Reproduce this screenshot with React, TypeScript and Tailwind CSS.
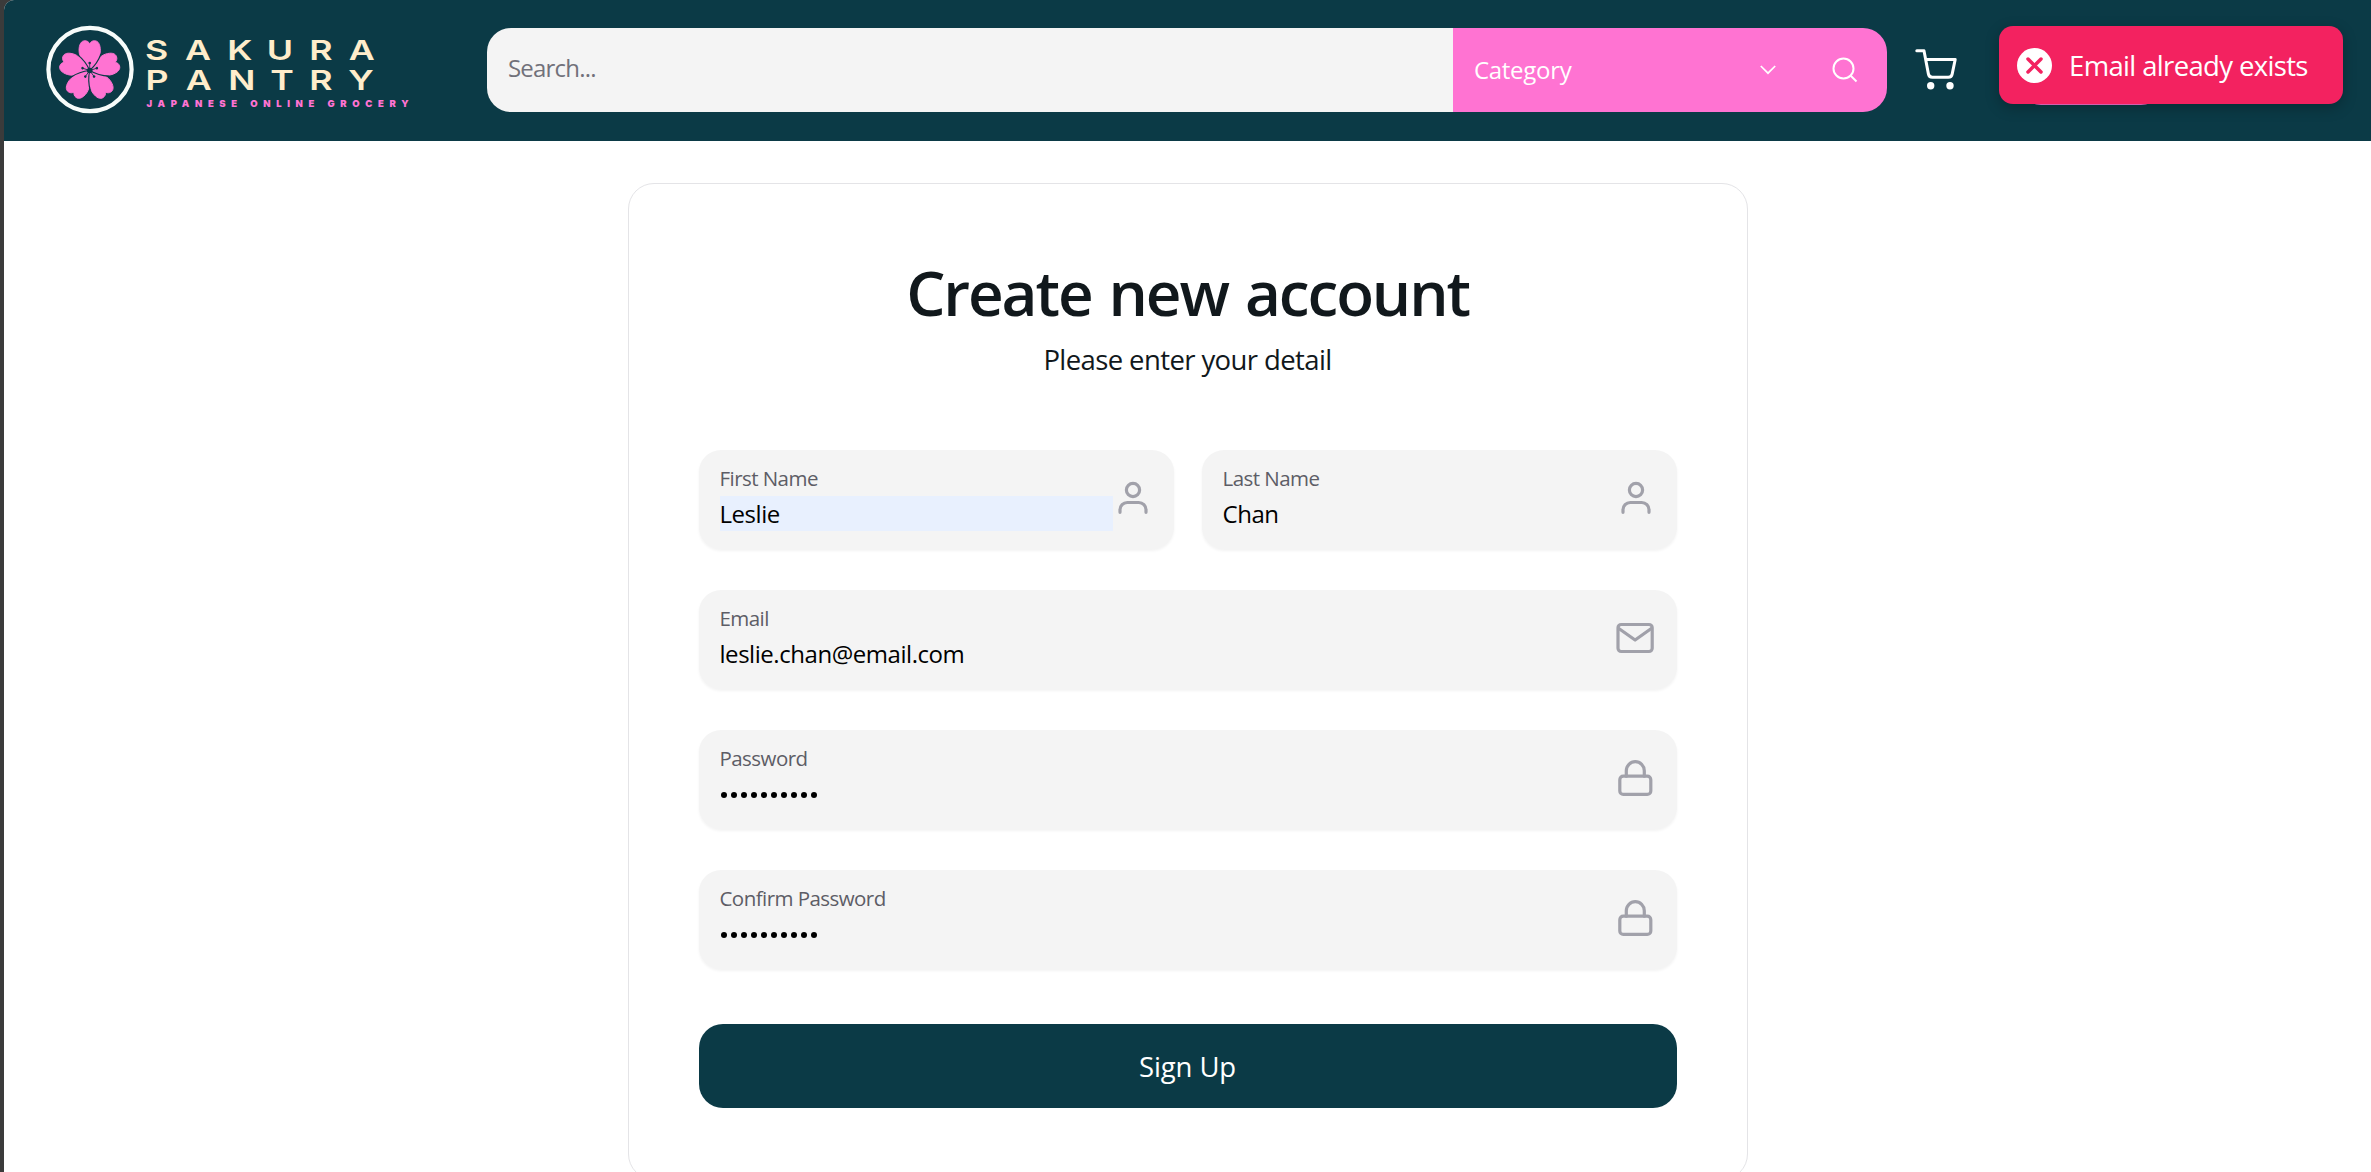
import React from "react";

const PETAL = "M0 0 C-4 -4 -10.700 -13 -10.700 -20 C-10.700 -26 -8.500 -29.800 -4.800 -29.800 C-2.400 -29.800 -1 -28.500 0 -26.800 C1 -28.500 2.400 -29.800 4.800 -29.800 C8.500 -29.800 10.700 -26 10.700 -20 C10.700 -13 4 -4 0 0Z";

function Logo() {
  return (
    <svg width="370" height="90" viewBox="45 25 370 90" className="shrink-0" fontFamily="Inter, sans-serif">
      <circle cx="90" cy="69.5" r="41.6" fill="none" stroke="#f7fcfa" strokeWidth="4.2" />
      <g transform="translate(89.700 70.5)">
        {[0, 72, 144, 216, 288].map((a) => (
          <path key={a} transform={`rotate(${a})`} d={PETAL} fill="#ff73d2" stroke="#ff73d2" strokeWidth="0.9" />
        ))}
        {[0, 72, 144, 216, 288].map((a) => (
          <g key={a} transform={`rotate(${a})`} stroke="#0b3a46" fill="none">
            <path d="M0 0C4.500 -4 8.500 -9 11.300 -16.500" strokeWidth="1.100" />
            <path d="M0 0V-7" strokeWidth="0.8" />
            <circle cx="0" cy="-7.5" r="1.3" fill="#0b3a46" stroke="none" />
          </g>
        ))}
        <circle r="2.8" fill="#0b3a46" />
      </g>
      <g fill="#ffedcb" fontSize="27.500" fontWeight="600">
        <text transform="translate(145 59.6) scale(1.3 1)" x="0 30.800 63.300 93.700 126.300 156.800">SAKURA</text>
        <text transform="translate(145 89.600) scale(1.3 1)" x="0.3 31.300 64 96.300 126.300 156.300">PANTRY</text>
      </g>
      <text x="146.5" y="107" fill="#ff73d2" fontSize="9.5" fontWeight="900" textLength="262">JAPANESE ONLINE GROCERY</text>
    </svg>
  );
}

const icon = {
  fill: "none",
  stroke: "#a1a1aa",
  strokeWidth: 3.2,
  strokeLinecap: "round" as const,
  strokeLinejoin: "round" as const,
  className: "mb-[3px] shrink-0",
};

function UserIcon() {
  return (
    <svg width="42" height="42" viewBox="0 0 42 42" {...icon}>
      <circle cx="21" cy="13" r="6.6" />
      <path d="M8 35.3v-2.6a7.2 7.2 0 0 1 7.2-7.2h11.6a7.2 7.2 0 0 1 7.2 7.2v2.6" />
    </svg>
  );
}

function MailIcon() {
  return (
    <svg width="42" height="42" viewBox="0 0 42 42" {...icon}>
      <rect x="3" y="7.5" width="34.2" height="27" rx="3.2" />
      <path d="M3.8 11.5 20.1 23 36.3 11.5" />
    </svg>
  );
}

function LockIcon() {
  return (
    <svg width="42" height="42" viewBox="0 0 42 42" {...icon}>
      <rect x="4.8" y="19.2" width="31" height="18.2" rx="3.5" />
      <path d="M11.3 19.2V13.700a9 9 0 0 1 18 0v5.5" />
    </svg>
  );
}

type FieldProps = { label: string; value: string; Icon: () => React.JSX.Element; autofill?: boolean; password?: boolean };

function Field({ label, value, Icon, autofill, password }: FieldProps) {
  return (
    <div className="flex h-[99px] min-w-0 flex-1 items-center rounded-[22px] bg-[#f4f4f4] pr-[20px] pl-[21px] shadow-[0_2px_3px_rgba(0,0,0,0.05)]">
      <div className="-mr-px mb-[4px] flex min-w-0 flex-1 flex-col">
        <label className="h-[31px] text-[20.500px] leading-[26px] tracking-[-0.550px] whitespace-nowrap text-[#5d5d66]">{label}</label>
        <div className={`flex h-[35px] items-center text-black ${autofill ? "bg-[#e8f0fe]" : ""}`}>
          {password ? (
            <div className="mt-[4px] flex gap-[4px] pl-px">
              {Array.from(value).map((_, i) => (
                <span key={i} className="size-[6px] rounded-full bg-black" />
              ))}
            </div>
          ) : (
            <span className="text-[24px] leading-[35px] tracking-[-0.450px]">{value}</span>
          )}
        </div>
      </div>
      <Icon />
    </div>
  );
}

export default function App() {
  return (
    <div className="flex h-[1172px] w-[2371px] overflow-hidden bg-[#3b3b3b] font-['Open_Sans',sans-serif]">
      <div className="ml-[4px] flex flex-1 flex-col overflow-hidden rounded-tl-[10px] bg-white">
        <header className="flex h-[141px] shrink-0 items-center bg-[#0b3a46] pb-px pl-[41px]">
          <Logo />
          <div className="ml-[72px] flex h-[84px] w-[1400px] shrink-0 overflow-hidden rounded-[24px]">
            <div className="flex w-[966px] items-center bg-[#f4f4f4] pl-[21px] text-[24px] tracking-[-0.800px] text-[#71717a]">
              <span className="-mt-1">Search...</span>
            </div>
            <div className="flex flex-1 items-center bg-[#ff73d2] pl-[21px] text-white">
              <span className="w-[286px] text-[24px] tracking-[-0.300px]">Category</span>
              <svg width="16" height="10" viewBox="0 0 16 10" fill="none" stroke="currentColor" strokeWidth="1.7">
                <path d="m.8 1 7.2 7.2L15.200 1" />
              </svg>
              <svg className="ml-[56px]" width="26" height="26" viewBox="0 0 26 26" fill="none" stroke="currentColor" strokeWidth="2">
                <circle cx="11.500" cy="11.500" r="10" />
                <path d="m18.500 18.500 6 6" />
              </svg>
            </div>
          </div>
          <svg className="ml-[28px] shrink-0" width="44" height="44" viewBox="0 0 44 44" fill="none" stroke="white" strokeWidth="3" strokeLinecap="round" strokeLinejoin="round">
            <path d="M1.800 2.700H9l4.400 23.200a4 4 0 0 0 4 3.300h15.800a4 4 0 0 0 4-3.300L40.200 11.500H10.700" />
            <circle cx="15.700" cy="37.700" r="2.200" fill="white" />
            <circle cx="35" cy="37.700" r="2.200" fill="white" />
          </svg>
          <div className="relative ml-[58px] h-[70px] w-[148px] shrink-0 rounded-[24px] bg-[#ff73d2]">
            <div className="absolute top-[-9px] left-[-18px] flex h-[78px] w-[344px] items-center rounded-[14px] bg-[#f32260] pl-[18px] text-white shadow-[0_4px_14px_rgba(0,0,0,0.25)]">
              <svg width="35" height="35" viewBox="0 0 35 35">
                <circle cx="17.500" cy="17.500" r="17.500" fill="white" />
                <path d="m11 11 13 13M24 11 11 24" stroke="#f32260" strokeWidth="3.500" strokeLinecap="round" />
              </svg>
              <span className="mt-[2px] ml-[17px] text-[27.500px] tracking-[-0.650px] whitespace-nowrap">Email already exists</span>
            </div>
          </div>
        </header>
        <main className="flex flex-1 justify-center pt-[42px]">
          <form className="flex h-[997px] w-[1120px] shrink-0 flex-col rounded-[26px] border border-[#e4e4e7] px-[70px] pt-[70px]">
            <h1 className="h-[84px] text-center text-[62px] leading-[76px] font-semibold tracking-[-2.100px] text-[#11181c] [word-spacing:3px]">Create new account</h1>
            <p className="h-[112px] text-center text-[27.500px] leading-[44px] tracking-[-0.600px] text-[#11181c]">Please enter your detail</p>
            <div className="flex flex-col gap-[41px]">
              <div className="flex gap-[28px]">
                <Field label="First Name" value="Leslie" Icon={UserIcon} autofill />
                <Field label="Last Name" value="Chan" Icon={UserIcon} />
              </div>
              <div className="flex">
                <Field label="Email" value="leslie.chan@email.com" Icon={MailIcon} />
              </div>
              <div className="flex">
                <Field label="Password" value="1234567890" Icon={LockIcon} password />
              </div>
              <div className="flex">
                <Field label="Confirm Password" value="1234567890" Icon={LockIcon} password />
              </div>
            </div>
            <button type="button" className="mt-[55px] h-[84px] rounded-[24px] bg-[#0b3a46] pt-[2px] text-[27.500px] tracking-[-0.100px] text-white">Sign Up</button>
          </form>
        </main>
      </div>
    </div>
  );
}
